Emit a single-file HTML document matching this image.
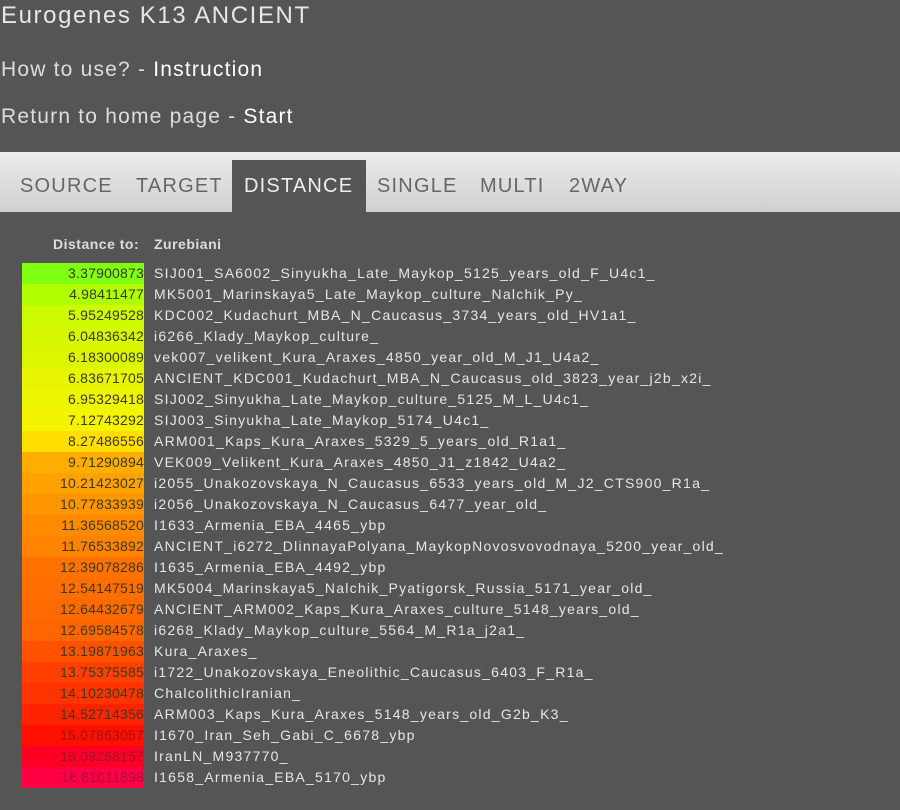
<!DOCTYPE html>
<html><head><style>
body{margin:0;background:#555;width:900px;height:810px;overflow:hidden;font-family:"Liberation Sans",sans-serif;color:#ddd}
.t{position:absolute;left:1px;top:2px;font-size:24px;color:#e6e6e6;letter-spacing:1.6px}
.l{position:absolute;left:1px;font-size:21px;color:#ddd;letter-spacing:1.2px}
.l b{font-weight:normal;color:#fff}
.tabs{position:absolute;left:0;top:152px;width:900px;height:60px;background:linear-gradient(#ececec,#d0d0d0)}
.tab{position:absolute;top:8px;height:52px;line-height:52px;font-size:20px;color:#666;letter-spacing:1.2px}
.tab.a{background:#555;color:#eee;padding:0 12px;width:110px}
.hd{position:absolute;top:236px;font-size:14px;font-weight:bold;color:#ddd;letter-spacing:0.5px}
.row{position:absolute;left:22px;height:21px;width:870px}
.n{position:absolute;left:0;width:122px;height:21px;text-align:right;font-size:14px;line-height:21px;color:#3a3a1a;letter-spacing:0.2px}
.s{position:absolute;left:132px;font-size:14px;line-height:21px;color:#e6e6e6;white-space:nowrap;letter-spacing:1.25px}
</style></head><body>
<div class="t">Eurogenes K13 ANCIENT</div>
<div class="l" style="top:58px">How to use? - <b>Instruction</b></div>
<div class="l" style="top:105px">Return to home page - <b>Start</b></div>
<div class="tabs">
<div class="tab" style="left:20px">SOURCE</div>
<div class="tab" style="left:136px">TARGET</div>
<div class="tab a" style="left:232px">DISTANCE</div>
<div class="tab" style="left:377px">SINGLE</div>
<div class="tab" style="left:480px">MULTI</div>
<div class="tab" style="left:569px">2WAY</div>
</div>
<div class="hd" style="left:53px">Distance to:</div>
<div class="hd" style="left:154px">Zurebiani</div>
<div class="row" style="top:263px"><div class="n" style="background:#80ff10">3.37900873</div><div class="s">SIJ001_SA6002_Sinyukha_Late_Maykop_5125_years_old_F_U4c1_</div></div>
<div class="row" style="top:284px"><div class="n" style="background:#b0ff00">4.98411477</div><div class="s">MK5001_Marinskaya5_Late_Maykop_culture_Nalchik_Py_</div></div>
<div class="row" style="top:305px"><div class="n" style="background:#cdfa00">5.95249528</div><div class="s">KDC002_Kudachurt_MBA_N_Caucasus_3734_years_old_HV1a1_</div></div>
<div class="row" style="top:326px"><div class="n" style="background:#d5f800">6.04836342</div><div class="s">i6266_Klady_Maykop_culture_</div></div>
<div class="row" style="top:347px"><div class="n" style="background:#dcf600">6.18300089</div><div class="s">vek007_velikent_Kura_Araxes_4850_year_old_M_J1_U4a2_</div></div>
<div class="row" style="top:368px"><div class="n" style="background:#e8f500">6.83671705</div><div class="s">ANCIENT_KDC001_Kudachurt_MBA_N_Caucasus_old_3823_year_j2b_x2i_</div></div>
<div class="row" style="top:389px"><div class="n" style="background:#eef500">6.95329418</div><div class="s">SIJ002_Sinyukha_Late_Maykop_culture_5125_M_L_U4c1_</div></div>
<div class="row" style="top:410px"><div class="n" style="background:#f4f400">7.12743292</div><div class="s">SIJ003_Sinyukha_Late_Maykop_5174_U4c1_</div></div>
<div class="row" style="top:431px"><div class="n" style="background:#ffde00">8.27486556</div><div class="s">ARM001_Kaps_Kura_Araxes_5329_5_years_old_R1a1_</div></div>
<div class="row" style="top:452px"><div class="n" style="background:#ffae00">9.71290894</div><div class="s">VEK009_Velikent_Kura_Araxes_4850_J1_z1842_U4a2_</div></div>
<div class="row" style="top:473px"><div class="n" style="background:#ffa200">10.21423027</div><div class="s">i2055_Unakozovskaya_N_Caucasus_6533_years_old_M_J2_CTS900_R1a_</div></div>
<div class="row" style="top:494px"><div class="n" style="background:#ff9600">10.77833939</div><div class="s">i2056_Unakozovskaya_N_Caucasus_6477_year_old_</div></div>
<div class="row" style="top:515px"><div class="n" style="background:#ff8a00">11.36568520</div><div class="s">I1633_Armenia_EBA_4465_ybp</div></div>
<div class="row" style="top:536px"><div class="n" style="background:#ff8200">11.76533892</div><div class="s">ANCIENT_i6272_DlinnayaPolyana_MaykopNovosvovodnaya_5200_year_old_</div></div>
<div class="row" style="top:557px"><div class="n" style="background:#ff7200">12.39078286</div><div class="s">I1635_Armenia_EBA_4492_ybp</div></div>
<div class="row" style="top:578px"><div class="n" style="background:#ff6e00">12.54147519</div><div class="s">MK5004_Marinskaya5_Nalchik_Pyatigorsk_Russia_5171_year_old_</div></div>
<div class="row" style="top:599px"><div class="n" style="background:#ff6a00">12.64432679</div><div class="s">ANCIENT_ARM002_Kaps_Kura_Araxes_culture_5148_years_old_</div></div>
<div class="row" style="top:620px"><div class="n" style="background:#ff6600">12.69584578</div><div class="s">i6268_Klady_Maykop_culture_5564_M_R1a_j2a1_</div></div>
<div class="row" style="top:641px"><div class="n" style="background:#ff5200">13.19871963</div><div class="s">Kura_Araxes_</div></div>
<div class="row" style="top:662px"><div class="n" style="background:#ff4000">13.75375585</div><div class="s">i1722_Unakozovskaya_Eneolithic_Caucasus_6403_F_R1a_</div></div>
<div class="row" style="top:683px"><div class="n" style="background:#ff3400">14.10230478</div><div class="s">ChalcolithicIranian_</div></div>
<div class="row" style="top:704px"><div class="n" style="background:#ff2400">14.52714356</div><div class="s">ARM003_Kaps_Kura_Araxes_5148_years_old_G2b_K3_</div></div>
<div class="row" style="top:725px"><div class="n" style="background:#ff1000;color:#a01010">15.07863057</div><div class="s">I1670_Iran_Seh_Gabi_C_6678_ybp</div></div>
<div class="row" style="top:746px"><div class="n" style="background:#ff0025;color:#a01030">16.09268157</div><div class="s">IranLN_M937770_</div></div>
<div class="row" style="top:767px"><div class="n" style="background:#ff0045;color:#a01040">16.81011898</div><div class="s">I1658_Armenia_EBA_5170_ybp</div></div>
</body></html>
